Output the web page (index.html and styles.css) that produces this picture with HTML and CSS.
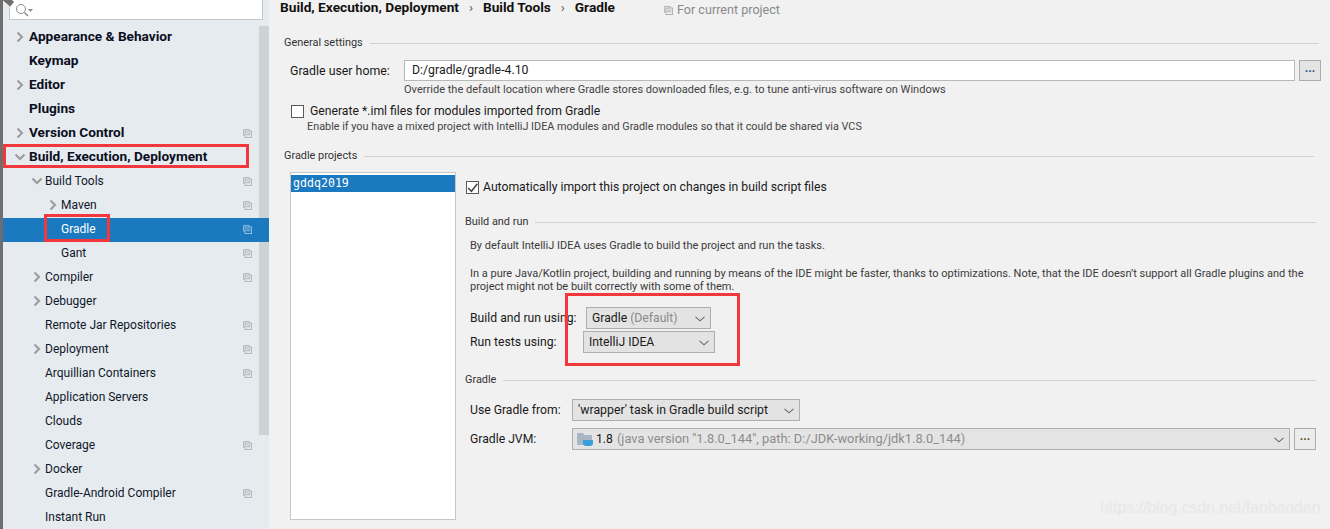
FILE: index.html
```html
<!DOCTYPE html>
<html lang="en">
<head>
<meta charset="utf-8">
<title>Gradle settings</title>
<link rel="stylesheet" href="styles.css">
</head>
<body>
<svg class="defs" width="0" height="0" aria-hidden="true">
  <symbol id="copy" viewBox="0 0 11 11"><path d="M.5 .5h7v2M.5 .5v7h2" fill="none" stroke="currentColor"/><rect x="2.500" y="2.500" width="8" height="8" fill="none" stroke="currentColor"/><path d="M4 5h5M4 7h5" stroke="currentColor"/></symbol>
  <symbol id="right" viewBox="0 0 8 12"><path d="M1.500 1.500 6 6l-4.500 4.500" fill="none" stroke="currentColor" stroke-width="2"/></symbol>
  <symbol id="down" viewBox="0 0 12 8"><path d="M1.500 1.500 6 6l4.500-4.500" fill="none" stroke="currentColor" stroke-width="2"/></symbol>
  <symbol id="chev" viewBox="0 0 10 6"><path d="M.5 .8 5 4.800 9.500 .8" fill="none" stroke="currentColor" stroke-width="1.100"/></symbol>
</svg>
<aside class="sidebar">
  <div class="corner"></div>
  <div class="search">
    <svg class="search-icon" width="18" height="14" viewBox="0 0 18 14"><circle cx="6" cy="6" r="4.500" fill="none" stroke="#8a8a8a"/><path d="M9.500 9.500 13 13" stroke="#8a8a8a" stroke-width="1.400"/><path d="M13 6h5l-2.500 3z" fill="#8a8a8a"/></svg>
  </div>
  <div class="scrollbar"></div>
  <nav class="tree">
    <div class="row l0 b"><svg class="tw"><use href="#right"/></svg><span>Appearance &amp; Behavior</span></div>
    <div class="row l0 b"><span>Keymap</span></div>
    <div class="row l0 b"><svg class="tw"><use href="#right"/></svg><span>Editor</span></div>
    <div class="row l0 b"><span>Plugins</span></div>
    <div class="row l0 b"><svg class="tw"><use href="#right"/></svg><span>Version Control</span><svg class="cp"><use href="#copy"/></svg></div>
    <div class="row l0 b"><svg class="tw dn"><use href="#down"/></svg><span>Build, Execution, Deployment</span></div>
    <div class="row l1"><svg class="tw dn"><use href="#down"/></svg><span>Build Tools</span><svg class="cp"><use href="#copy"/></svg></div>
    <div class="row l2"><svg class="tw"><use href="#right"/></svg><span>Maven</span><svg class="cp"><use href="#copy"/></svg></div>
    <div class="row l2 sel"><span>Gradle</span><svg class="cp"><use href="#copy"/></svg></div>
    <div class="row l2"><span>Gant</span><svg class="cp"><use href="#copy"/></svg></div>
    <div class="row l1"><svg class="tw"><use href="#right"/></svg><span>Compiler</span><svg class="cp"><use href="#copy"/></svg></div>
    <div class="row l1"><svg class="tw"><use href="#right"/></svg><span>Debugger</span></div>
    <div class="row l1"><span>Remote Jar Repositories</span><svg class="cp"><use href="#copy"/></svg></div>
    <div class="row l1"><svg class="tw"><use href="#right"/></svg><span>Deployment</span><svg class="cp"><use href="#copy"/></svg></div>
    <div class="row l1"><span>Arquillian Containers</span><svg class="cp"><use href="#copy"/></svg></div>
    <div class="row l1"><span>Application Servers</span></div>
    <div class="row l1"><span>Clouds</span></div>
    <div class="row l1"><span>Coverage</span><svg class="cp"><use href="#copy"/></svg></div>
    <div class="row l1"><svg class="tw"><use href="#right"/></svg><span>Docker</span></div>
    <div class="row l1"><span>Gradle-Android Compiler</span><svg class="cp"><use href="#copy"/></svg></div>
    <div class="row l1"><span>Instant Run</span></div>
  </nav>
</aside>
<main class="content">
  <header class="crumbs">
    <b>Build, Execution, Deployment</b><i>›</i><b>Build Tools</b><i>›</i><b>Gradle</b>
    <span class="scope"><svg class="cp2"><use href="#copy"/></svg>For current project</span>
  </header>

  <div class="title t-general"><span>General settings</span></div>
  <div class="home-row">
    <label class="home-label">Gradle user home:</label>
    <div class="input">D:/gradle/gradle-4.10</div>
    <div class="dots">...</div>
  </div>
  <p class="hint home-hint">Override the default location where Gradle stores downloaded files, e.g. to tune anti-virus software on Windows</p>
  <div class="check-row iml"><span class="box"></span><span>Generate *.iml files for modules imported from Gradle</span></div>
  <p class="hint iml-hint">Enable if you have a mixed project with IntelliJ IDEA modules and Gradle modules so that it could be shared via VCS</p>

  <div class="title t-projects"><span>Gradle projects</span></div>
  <div class="projects">
    <div class="list"><div class="item">gddq2019</div></div>
    <div class="detail">
      <div class="check-row auto">
        <span class="box"><svg width="13" height="13" viewBox="0 0 12 12"><path d="M2 6.500 5 9.500 10.500 2.500" fill="none" stroke="#444" stroke-width="1.400"/></svg></span>
        <span>Automatically import this project on changes in build script files</span>
      </div>
      <div class="title sub t-build"><span>Build and run</span></div>
      <p class="note n1">By default IntelliJ IDEA uses Gradle to build the project and run the tasks.</p>
      <p class="note n2">In a pure Java/Kotlin project, building and running by means of the IDE might be faster, thanks to optimizations. Note, that the IDE doesn’t support all Gradle plugins and the project might not be built correctly with some of them.</p>
      <div class="form-row r-build"><label class="l-build">Build and run using:</label><div class="combo c-gradle"><span>Gradle <em>(Default)</em></span><svg class="ch"><use href="#chev"/></svg></div></div>
      <div class="form-row r-tests"><label class="l-tests">Run tests using:</label><div class="combo c-idea"><span>IntelliJ IDEA</span><svg class="ch"><use href="#chev"/></svg></div></div>
      <div class="title sub t-gradle"><span>Gradle</span></div>
      <div class="form-row r-from"><label class="l-from">Use Gradle from:</label><div class="combo c-from"><span>'wrapper' task in Gradle build script</span><svg class="ch"><use href="#chev"/></svg></div></div>
      <div class="form-row r-jvm"><label class="l-from">Gradle JVM:</label>
        <div class="combo c-jvm">
          <span class="jvm-text"><svg class="jdk" width="18" height="16" viewBox="0 0 18 16"><path d="M0 2h6l1.500 2H15v10H0z" fill="#a9b7c4"/><path d="M6 9h10v3a3 3 0 0 1-3 3H9a3 3 0 0 1-3-3z" fill="#3a9fd8"/></svg>1.8 <em>(java version "1.8.0_144", path: D:/JDK-working/jdk1.8.0_144)</em></span>
          <svg class="ch"><use href="#chev"/></svg>
        </div>
        <div class="dots d-jvm">...</div>
      </div>
    </div>
  </div>
</main>
<div class="mark m-build"></div>
<div class="mark m-gradle"></div>
<div class="mark m-combo"></div>
<div class="watermark">https://blog.csdn.net/fanbaodan</div>
</body>
</html>
```
FILE: styles.css
```css
* { box-sizing: border-box; }
html, body { margin: 0; height: 529px; overflow: hidden; }
body { display: flex; background: #f1f1f1; color: #1a1a1a; font: 12.2px/16px Roboto, "Noto Sans", sans-serif; position: relative; }
.defs { position: absolute; }

.sidebar { width: 269px; flex: none; height: 529px; background: #e6ebf0; border-left: 3px solid #6e6e6e; position: relative; overflow: hidden; }
.corner { position: absolute; left: -5px; top: -4px; width: 16px; height: 6px; background: #6e6e6e; transform: rotate(40deg); }
.search { margin-left: 6px; width: 254px; height: 20px; background: #fff; border: 1px solid #c4c8cc; border-top: 0; padding: 3px 0 0 5px; }
.search-icon { display: block; }
.scrollbar { position: absolute; left: 256px; top: 26px; width: 10px; height: 409px; background: #cdd2d7; }
.tree { position: relative; margin-top: 6px; }
.row { height: 24px; display: flex; align-items: flex-start; line-height: 22px; font-size: 12px; position: relative; white-space: nowrap; color: #10182a; }
.row.b { font-weight: 700; font-size: 13.650px; line-height: 20px; color: #0b0f1e; }
.row.l0 { padding-left: 26px; }
.row.l1 { padding-left: 42px; }
.row.l2 { padding-left: 58px; }
.row.sel { background: #1b79c0; color: #fff; }
.tw { position: absolute; width: 8px; height: 12px; top: 5px; color: #9a9a9a; }
.tw.dn { width: 12px; height: 8px; top: 7px; }
.l0 .tw { left: 13px; }
.l0 .tw.dn { left: 11px; }
.l1 .tw { left: 30px; }
.l1 .tw.dn { left: 28px; }
.l2 .tw { left: 46px; }
.cp { position: absolute; left: 240px; top: 7px; width: 9px; height: 9px; color: #a9adb1; }
.sel .cp { color: #a6cae6; }

.content { flex: 1; min-width: 0; padding-left: 11px; }
.crumbs { height: 14px; display: flex; align-items: center; font-size: 13.700px; line-height: 14px; white-space: nowrap; color: #111; position: relative; }
.crumbs b { font-weight: 700; }
.crumbs i { font-style: normal; color: #555; width: 24px; text-align: center; }
.scope { margin-left: 49px; margin-top: 6px; color: #8a8a8a; font-size: 12.600px; display: flex; align-items: center; }
.cp2 { width: 9px; height: 9px; margin-right: 4px; color: #a4a4a4; }

.title { display: flex; align-items: center; gap: 7px; height: 16px; font-size: 10.900px; color: #333; white-space: nowrap; }
.title::after { content: ""; flex: 1; height: 1px; background: #d0d0d0; }
.t-general { margin: 21px 11px 0 4px; }
.home-row { display: flex; align-items: center; margin: 9px 9px 0 10px; height: 21px; }
.home-label { width: 114px; font-size: 12.350px; }
.input { width: 891px; height: 21px; background: #fff; border: 1px solid #b8b8b8; padding-left: 7px; line-height: 19px; font-size: 12.300px; }
.dots { width: 22px; height: 21px; margin-left: 4px; background: #e4e4e4; border: 1px solid #acacac; text-align: center; font-weight: 700; line-height: 15px; color: #23527c; }
.hint { margin: 0; font-size: 10.850px; line-height: 14px; color: #444; white-space: nowrap; }
.home-hint { margin: 2px 0 0 124px; font-size: 11.050px; }
.check-row { display: flex; align-items: center; white-space: nowrap; }
.box { width: 13px; height: 13px; border: 1px solid #5a5a5a; background: #fff; flex: none; display: block; }
.box svg { display: block; margin: -1px 0 0 -1px; }
.iml { margin: 6px 0 0 11px; height: 16px; gap: 6px; }
.iml-hint { margin: 1px 0 0 27px; }
.t-projects { margin: 14px 16px 0 4px; }
.projects { display: flex; margin: 8px 0 0 10px; }
.list { width: 166px; height: 348px; flex: none; background: #fff; border: 1px solid #c6c6c6; padding-top: 2px; }
.item { height: 17px; padding-left: 2px; background: #1b79c0; color: #fff; font: 11.600px/17px "DejaVu Sans Mono", monospace; }
.detail { flex: 1; margin-left: 9px; padding-right: 16px; }
.auto { margin: 7px 0 0 1px; height: 16px; gap: 4px; }
.sub { margin-top: 19px; }
.t-build { margin-top: 19px; }
.note { margin: 0; font-size: 11px; line-height: 13px; color: #3a3a3a; padding-left: 5px; }
.n1 { margin-top: 9px; }
.n2 { margin-top: 15px; width: 845px; }
.form-row { display: flex; align-items: center; height: 22px; padding-left: 5px; white-space: nowrap; }
.form-row label { flex: none; }
.l-build { width: 116px; }
.l-tests { width: 113px; }
.l-from { width: 102px; }
.r-build { margin-top: 14px; }
.r-tests { margin-top: 2px; }
.combo { height: 22px; background: #e3e3e3; border: 1px solid #aeaeae; display: flex; align-items: center; justify-content: space-between; padding: 0 5px; }
.combo em { font-style: normal; color: #8a8a8a; }
.ch { width: 10px; height: 6px; color: #666; margin-top: 1px; }
.c-gradle { width: 125px; }
.c-idea { width: 132px; }
.t-gradle { margin-top: 19px; }
.r-from { margin-top: 11px; }
.c-from { width: 228px; font-size: 12.300px; }
.r-jvm { margin-top: 7px; }
.c-jvm { width: 718px; background: #e4e4e4; }
.jvm-text { display: flex; align-items: center; gap: 1px; white-space: pre; margin-left: -1px; }
.jvm-text em { color: #8c8c8c; font-size: 12.850px; }
.d-jvm { height: 22px; background: #ececec; color: #5a4a1c; }

.mark { position: absolute; border: 3px solid #f2383c; pointer-events: none; }
.m-build { left: 3px; top: 144px; width: 246px; height: 24px; }
.m-gradle { left: 44px; top: 214px; width: 66px; height: 28px; }
.m-combo { left: 565px; top: 293px; width: 175px; height: 73px; }
.watermark { position: absolute; left: 1100px; top: 499px; font: 15.800px/18px "Liberation Sans", sans-serif; color: #e8e8e8; text-shadow: 0 0 1px #ededed; white-space: nowrap; }
```
